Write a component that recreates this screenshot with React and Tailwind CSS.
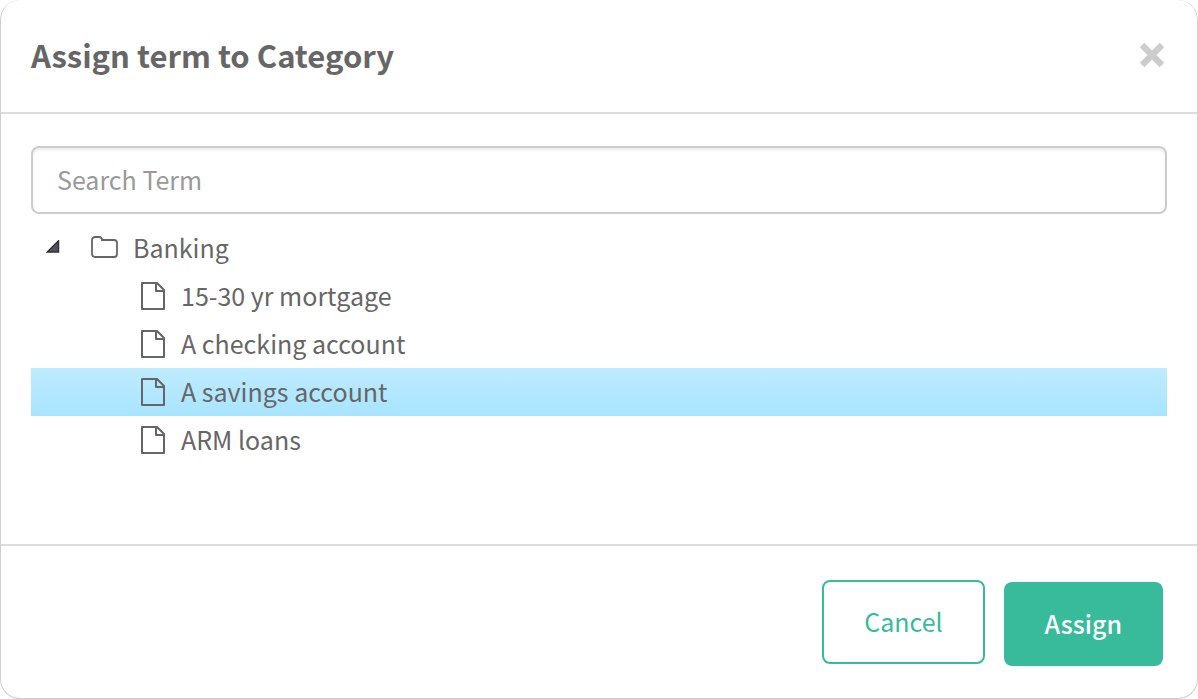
const terms = [
  { id: 'mortgage', label: '15-30 yr mortgage' },
  { id: 'checking', label: 'A checking account' },
  { id: 'savings', label: 'A savings account', selected: true },
  { id: 'arm', label: 'ARM loans' },
];

function FolderIcon() {
  return (
    <svg className="h-6 w-7 shrink-0" viewBox="0 0 28 24" fill="none" stroke="#666666" strokeWidth="1.800" aria-hidden="true">
      <path d="M2 5a3 3 0 0 1 3-3h4a3 3 0 0 1 3 3h12a3 3 0 0 1 3 3v11a3 3 0 0 1-3 3H5a3 3 0 0 1-3-3z" />
    </svg>
  );
}

function FileIcon() {
  return (
    <svg className="h-7 w-6 shrink-0" viewBox="0 0 24 28" fill="none" stroke="#666666" strokeWidth="2" strokeLinejoin="round" aria-hidden="true">
      <path d="M1 1H16L23 8V27H1Z" />
      <path d="M15 1V9H23" />
    </svg>
  );
}

function Expander() {
  return (
    <svg className="size-3.5" viewBox="0 0 14 14" aria-hidden="true">
      <path d="M12.500 0.800V12H1.300Z" fill="#505357" stroke="#303132" strokeWidth="1.500" />
    </svg>
  );
}

export default function App() {
  return (
    <div
      role="dialog"
      aria-labelledby="dialog-title"
      className="flex min-h-screen w-full flex-col rounded-[20px] border-x border-b border-[#cfcfcf] bg-white font-['Noto_Sans_CJK_SC',sans-serif] text-[25px] leading-12 text-[#666666]"
    >
      <header className="flex items-center justify-between border-b-2 border-[#dddddd] pt-[31px] pr-[31px] pb-[33px] pl-[30px]">
        <h1 id="dialog-title" className="text-[31px] leading-12 font-bold">Assign term to Category</h1>
        <button type="button" aria-label="Close" className="flex size-7 items-center justify-center">
          <svg className="size-7" viewBox="0 0 28 28" fill="none" stroke="#cccccc" strokeWidth="6.500" aria-hidden="true">
            <path d="M4 4L24 24M24 4L4 24" />
          </svg>
        </button>
      </header>

      <main className="flex grow flex-col px-[30px] pt-8 pb-20">
        <input
          type="text"
          aria-label="Search Term"
          placeholder="Search Term"
          className="mb-2.5 h-[68px] w-full rounded-lg border-2 border-[#cccccc] px-6 pb-0.5 shadow-[inset_0_2px_3px_rgba(0,0,0,0.08)] placeholder:text-[#999999]"
        />
        <ul>
          <li>
            <div className="flex h-12 items-center pb-0.5 pl-[15px]">
              <button type="button" aria-label="Collapse Banking" aria-expanded="true" className="mr-[30px]">
                <Expander />
              </button>
              <FolderIcon />
              <span className="ml-[15px]">Banking</span>
            </div>
            <ul>
              {terms.map((term) => (
                <li
                  key={term.id}
                  className={
                    term.selected
                      ? 'flex h-12 items-center gap-4 bg-linear-to-b from-[#beebff] to-[#a8e4ff] pl-[110px]'
                      : 'flex h-12 items-center gap-4 pl-[110px]'
                  }
                >
                  <FileIcon />
                  <span className="pb-0.5">{term.label}</span>
                </li>
              ))}
            </ul>
          </li>
        </ul>
      </main>

      <footer className="flex justify-end gap-[19px] border-t-2 border-[#dddddd] px-[34px] pt-[34px] pb-8">
        <button type="button" className="mb-0.5 h-[84px] rounded-lg border-2 border-[#38bb9b] px-10 pb-0.5 text-[#38bb9b]">
          Cancel
        </button>
        <button type="button" className="mt-0.5 h-[84px] rounded-lg bg-[#38bb9b] px-[41px] pb-0.5 font-medium text-white">
          Assign
        </button>
      </footer>
    </div>
  );
}
